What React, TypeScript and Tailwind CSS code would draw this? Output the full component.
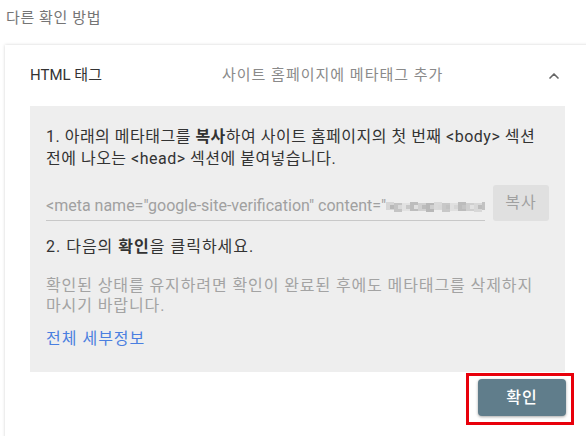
import { ChevronUp } from 'lucide-react';

// 흐림 처리된 토큰 조각 (모자이크)
const blurBlocks = [
  '#d6d6d6', '#c4c4c4', '#e2e2e2', '#bdbdbd', '#d0d0d0', '#b8b8b8', '#dadada', '#c8c8c8',
  '#e0e0e0', '#bcbcbc', '#cfcfcf', '#d8d8d8', '#c2c2c2',
];

const Blurred = () => (
  <svg width="102" height="12" viewBox="0 0 102 12" className="shrink-0">
    {blurBlocks.map((c, i) => (
      <rect key={i} x={i * 8} y={i % 3 === 0 ? 1 : 2} width="8" height={i % 2 ? 9 : 8} fill={c} />
    ))}
    {blurBlocks.map((c, i) => (
      <rect key={'b' + i} x={i * 8 + 4} y="4" width="4" height="4" fill={blurBlocks[(i + 5) % blurBlocks.length]} />
    ))}
  </svg>
);

const App = () => {
  return (
    <div
      className="w-[586px] h-[436px] overflow-hidden bg-white"
      style={{ fontFamily: "Roboto, 'Noto Sans CJK KR', sans-serif" }}
    >
      <div className="h-[37px] pl-[6px] flex items-center text-[15px] tracking-[0.6px] text-[#757575]">다른 확인 방법</div>

      <div className="mt-[8px] ml-[5px] w-[585px] h-[400px] bg-white shadow-[0_0_3px_rgba(0,0,0,0.18)] flex flex-col">
        {/* 헤더 */}
        <div className="h-[61px] flex items-center pl-[25px] pr-[24px] text-[15px]">
          <span className="w-[192px] text-[#333]">HTML 태그</span>
          <span className="text-[#8a8a8a] tracking-[1px]">사이트 홈페이지에 메타태그 추가</span>
          <ChevronUp className="ml-auto mr-[4px] text-[#666]" size={16} strokeWidth={2.5} />
        </div>

        {/* 내용 패널 */}
        <div className="mx-[25px] h-[266px] bg-[#eeeeee] pl-[16px] pr-[16px] pt-[20px] text-[16px] leading-[22px] break-keep">
          <p className="text-[#333] tracking-[0.5px]">
            1. 아래의 메타태그를 <b className="font-bold">복사</b>하여 사이트 홈페이지의 첫 번째 &lt;body&gt; 섹션 전에 나오는 &lt;head&gt; 섹션에 붙여넣습니다.
          </p>

          <div className="mt-[14px] flex items-center gap-[8px]">
            <div className="w-[439px] h-[37px] flex items-end border-b border-[#c8c8c8] pb-[3px] overflow-hidden">
              <span className="whitespace-nowrap text-[#a0a0a0]">&lt;meta name="google-site-verification" content="</span>
              <span className="mb-[4px]">
                <Blurred />
              </span>
            </div>
            <button className="w-[56px] h-[36px] rounded-[3px] bg-[#e0e0e0] text-[#a0a0a0] text-[16px] tracking-[1px]">복사</button>
          </div>

          <p className="mt-[15px] text-[#333] tracking-[1px]">
            2. 다음의 <b className="font-bold">확인</b>을 클릭하세요.
          </p>

          <p className="mt-[18px] text-[#a3a3a3] leading-[20px] tracking-[0.9px]">
            확인된 상태를 유지하려면 확인이 완료된 후에도 메타태그를 삭제하지 마시기 바랍니다.
          </p>

          <p className="mt-[12px] text-[#4a7fe0] tracking-[1px]">전체 세부정보</p>
        </div>

        {/* 확인 버튼 */}
        <div className="flex justify-end pr-[16px] mt-[1px]">
          <div className="border-[3px] border-[#e8000b] pl-[9px] pr-[5px] pt-[3px] pb-[6px]">
            <button className="w-[88px] h-[37px] rounded-[4px] bg-[#607d8b] text-white text-[16px] font-medium tracking-[1px] shadow-[0_1px_3px_rgba(0,0,0,0.35)]">
              확인
            </button>
          </div>
        </div>
      </div>
    </div>
  );
};

export default App;
